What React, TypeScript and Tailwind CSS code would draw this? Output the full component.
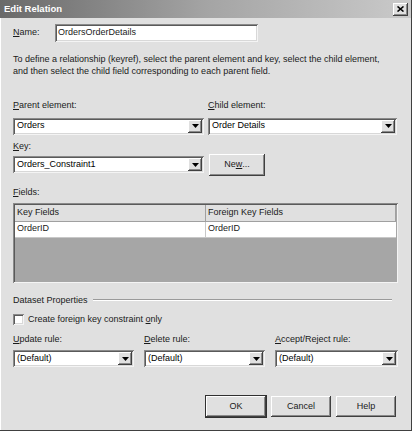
import React from "react";

const sunken = "bg-white shadow-[inset_1px_1px_0_#8a8a8a,inset_-1px_-1px_0_#f4f4f4,inset_2px_2px_0_#5a5a5a,inset_-2px_-2px_0_#d8d8d8]";
const raised = "bg-[#e0e0e0] shadow-[inset_-1px_-1px_0_#404040,inset_1px_1px_0_#ffffff,inset_-2px_-2px_0_#8a8a8a]";

function U({ children }: { children: React.ReactNode }) {
    return <span className="underline underline-offset-1">{children}</span>;
}

function Combo({ value, className = "" }: { value: string; className?: string }) {
    return (
        <div className={`flex h-[17px] items-center ${sunken} ${className}`}>
            <span className="flex-1 truncate pl-[4px] text-black">{value}</span>
            <div className={`mr-[2px] flex h-[13px] w-[14px] items-center justify-center ${raised}`}>
                <svg width="7" height="4" viewBox="0 0 7 4">
                    <path d="M0 0h7L3.5 4z" fill="#000" />
                </svg>
            </div>
        </div>
    );
}

function Button({ children, primary = false, className = "" }: { children: React.ReactNode; primary?: boolean; className?: string }) {
    return (
        <div
            className={`flex items-center justify-center ${raised} ${primary ? "outline outline-1 outline-[#303030]" : ""} ${className}`}
        >
            {children}
        </div>
    );
}

export default function App() {
    return (
        <div className="h-[432px] w-[414px] bg-white font-['Liberation_Sans',Arial,sans-serif] text-[9px] text-[#1a1a1a]">
            <div className="flex h-[431px] w-[412px] flex-col border-r border-b border-[#404040] bg-[#e0e0e0] shadow-[inset_1px_1px_0_#ffffff]">
                {/* title bar */}
                <div className="flex h-[18px] items-center bg-gradient-to-r from-[#6a6a6a] via-[#a4a4a4] to-[#cacaca] pl-[4px] pr-[3px]">
                    <span className="flex-1 text-[9.5px] font-bold text-white">Edit Relation</span>
                    <div className={`flex h-[13px] w-[15px] items-center justify-center ${raised}`}>
                        <svg width="7" height="6" viewBox="0 0 7 6">
                            <path d="M0.5 0.5l6 5M6.5 0.5l-6 5" stroke="#000" strokeWidth="1.6" />
                        </svg>
                    </div>
                </div>

                <div className="flex flex-col px-[13px]">
                    {/* name */}
                    <div className="mt-[6px] flex h-[18px] items-center">
                        <span className="w-[42px]">
                            <U>N</U>ame:
                        </span>
                        <div className={`flex h-[18px] w-[203px] items-center pl-[3px] ${sunken}`}>OrdersOrderDetails</div>
                    </div>

                    <p className="mt-[11px] leading-[12px]">
                        To define a relationship (keyref), select the parent element and key, select the child element,
                        <br />
                        and then select the child field corresponding to each parent field.
                    </p>

                    {/* parent / child */}
                    <div className="mt-[22px] grid grid-cols-[191px_189px] gap-x-[4px]">
                        <span>
                            <U>P</U>arent element:
                        </span>
                        <span>
                            <U>C</U>hild element:
                        </span>
                        <Combo value="Orders" className="mt-[5px]" />
                        <Combo value="Order Details" className="mt-[5px]" />
                    </div>

                    {/* key */}
                    <span className="mt-[5px]">
                        <U>K</U>ey:
                    </span>
                    <div className="flex items-start gap-[5px]">
                        <Combo value="Orders_Constraint1" className="mt-[3px] w-[191px]" />
                        <Button className="mt-[1px] h-[22px] w-[56px]">
                            Ne<U>w</U>...
                        </Button>
                    </div>

                    {/* fields */}
                    <span className="mt-[10px]">
                        <U>F</U>ields:
                    </span>
                    <div className="mt-[3px] flex h-[80px] w-[385px] flex-col bg-[#a6a6a6] p-[2px] shadow-[inset_1px_1px_0_#8a8a8a,inset_-1px_-1px_0_#f4f4f4,inset_2px_2px_0_#5a5a5a]">
                        <div className="flex h-[17px] bg-[#e0e0e0] border-b border-[#a0a0a0]">
                            <div className="flex w-[191px] items-center border-r border-[#a0a0a0] pl-[2px]">Key Fields</div>
                            <div className="flex flex-1 items-center border-r border-[#a0a0a0] pl-[2px]">Foreign Key Fields</div>
                        </div>
                        <div className="flex h-[16px] bg-white border-b border-[#c8c8c8]">
                            <div className="flex w-[191px] items-center border-r border-[#c8c8c8] pl-[2px]">OrderID</div>
                            <div className="flex flex-1 items-center pl-[2px]">OrderID</div>
                        </div>
                    </div>

                    {/* dataset properties */}
                    <div className="mt-[11px] flex items-center">
                        <span>Dataset Properties</span>
                        <div className="ml-[5px] mr-[6px] h-[2px] flex-1 border-t border-[#9a9a9a] border-b border-b-white" />
                    </div>

                    <div className="mt-[6px] flex items-center">
                        <div className={`h-[11px] w-[11px] ${sunken}`} />
                        <span className="ml-[4px]">
                            Create foreign key constraint <U>o</U>nly
                        </span>
                    </div>

                    {/* rules */}
                    <div className="mt-[6px] grid grid-cols-[121px_121px_123px] gap-x-[10px]">
                        <span>
                            <U>U</U>pdate rule:
                        </span>
                        <span>
                            <U>D</U>elete rule:
                        </span>
                        <span>
                            <U>A</U>ccept/Reject rule:
                        </span>
                        <Combo value="(Default)" className="mt-[4px]" />
                        <Combo value="(Default)" className="mt-[4px]" />
                        <Combo value="(Default)" className="mt-[4px]" />
                    </div>

                    {/* buttons */}
                    <div className="mt-[29px] flex justify-end gap-[5px] pr-[2px]">
                        <Button primary className="h-[21px] w-[60px]">
                            OK
                        </Button>
                        <Button className="h-[21px] w-[60px]">Cancel</Button>
                        <Button className="h-[21px] w-[60px]">Help</Button>
                    </div>
                </div>
            </div>
        </div>
    );
}
